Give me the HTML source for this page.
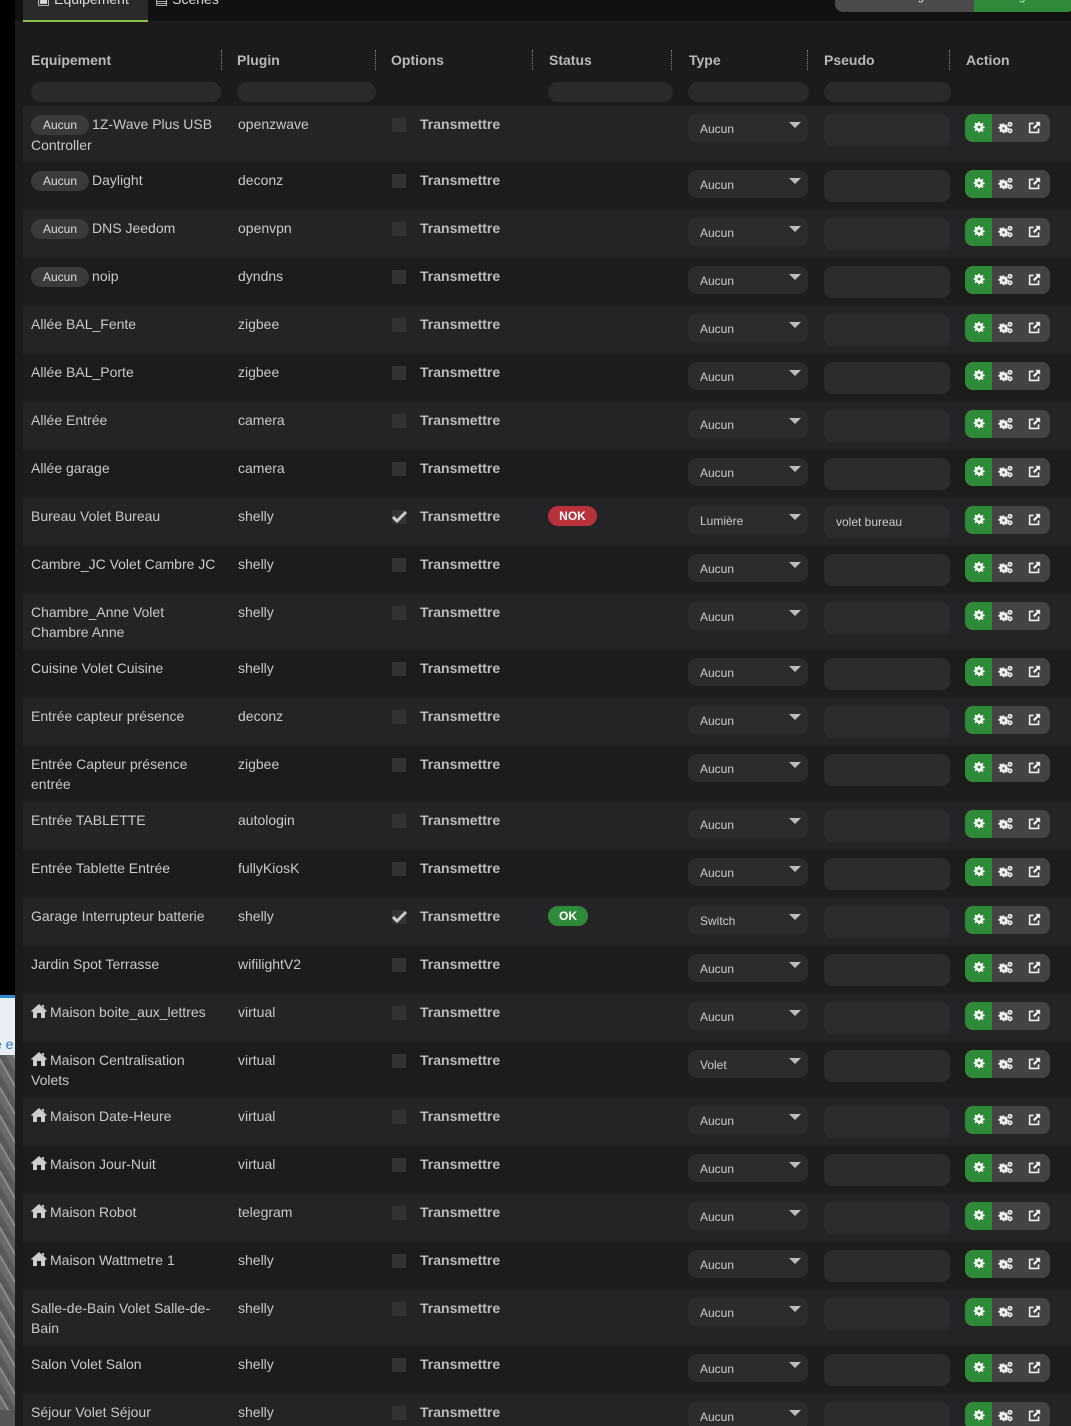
<!DOCTYPE html>
<html style="width:1071px;height:1426px;overflow:hidden"><head><meta charset="utf-8">
<style>
*{box-sizing:border-box;margin:0;padding:0}
html{overflow:hidden}
body{width:1071px;height:1426px;overflow:hidden;background:#1b1b1b;font-family:"Liberation Sans",sans-serif;font-size:14px;color:#c9c9c9;position:relative}
#strip{position:absolute;left:0;top:0;width:15px;height:1426px;background:#000}
#strip .w{position:absolute;left:0;top:995px;width:15px;height:60px;background:#e8eef3;border-top:3px solid #2a8ad8}
#strip .w span{position:absolute;left:-6px;top:38px;color:#2a7ac8;font-size:14px}
#strip .p{position:absolute;left:0;top:1055px;width:15px;height:355px;background:repeating-linear-gradient(60deg,#6b6969 0 6px,#8c8a8a 6px 8px,#5a5858 8px 14px)}
#strip .b{position:absolute;left:0;top:1410px;width:15px;height:16px;background:#555}
#main{position:absolute;left:15px;top:0;width:1056px;height:1426px;background:#1b1b1b;overflow:hidden}
#top{position:absolute;left:0;top:0;width:1056px;height:21px;background:#111}
.tab1{position:absolute;left:8px;top:-8px;width:125px;height:30px;background:#2a2a2a;border-bottom:2px solid #8bc34a;color:#ddd;padding:0 14px;line-height:14px;font-size:14px}
.tab2{position:absolute;left:140px;top:-8px;color:#ddd;line-height:14px;font-size:14px}
.btns{position:absolute;left:820px;top:-10px;height:22px;width:240px;border-radius:0 0 8px 8px;overflow:hidden;display:flex}
.btns .g1{background:#4a4a4a;width:139px;color:#eee;font-size:11px;padding-left:26px;line-height:14px}
.btns .g2{background:#2f8a3a;flex:1;color:#eee;font-size:11px;padding-left:14px;line-height:14px}
.hdr{position:absolute;top:52px;font-weight:bold;color:#b8b8b8;font-size:14px}
.sep{position:absolute;top:50px;height:20px;border-left:1px dotted #888}
.flt{position:absolute;top:82px;height:20px;border-radius:10px;background:#2a2a2a}
.r{position:absolute;left:8px;width:1048px}
.r.o{background:#242426}
.r.e{background:#1c1c1c}
.c{position:absolute;top:8px;line-height:20px}
.eq{left:8px;width:190px}
.pl{left:215px}
.cb{position:absolute;left:369px;top:12px;width:14px;height:14px;background:#333}
.cb svg{position:absolute;left:0;top:0}
.tr{left:397px;font-weight:bold;color:#bcbcbc}
.badge{display:inline-block;background:#3a3a3a;border-radius:10px;padding:0 12px;font-size:12px;line-height:20px;color:#ddd;margin-right:3px}
.st{position:absolute;top:8px;left:525px;height:20px;border-radius:10px;font-size:12px;line-height:20px;color:#fff;text-align:center;font-weight:bold}
.nok{background:#b8323a;width:49px}
.ok{background:#2e8b3a;width:40px}
.sel{position:absolute;left:665px;top:8px;width:120px;height:28px;border-radius:8px;background:#2c2c2c;font-size:12px;color:#ccc;padding:8px 0 0 12px}
.sel:after{content:"";position:absolute;right:7px;top:8px;border-left:6px solid transparent;border-right:6px solid transparent;border-top:6px solid #bbb}
.ps{position:absolute;left:801px;top:8px;width:126px;height:32px;border-radius:8px;background:#2c2c2c;font-size:12px;color:#ccc;padding:9px 0 0 12px}
.act{position:absolute;left:942px;top:8px;width:85px;height:28px;border-radius:8px;background:#434343;overflow:hidden}
.act .gr{position:absolute;left:0;top:0;width:27px;height:28px;background:#2e8b3a}
.act svg{position:absolute;top:7px}
</style></head><body>
<div id="strip"><div class="w"><span>e e</span></div><div class="p"></div><div class="b"></div></div>
<div id="main">
<div id="top"><div class="tab1">▣ Equipement</div><div class="tab2">▤ Scènes</div>
<div class="btns"><div class="g1">Voir la configuration</div><div class="g2">Sauvegarder</div></div></div>
<div class="hdr" style="left:16px">Equipement</div>
<div class="hdr" style="left:222px">Plugin</div>
<div class="hdr" style="left:376px">Options</div>
<div class="hdr" style="left:534px">Status</div>
<div class="hdr" style="left:674px">Type</div>
<div class="hdr" style="left:809px">Pseudo</div>
<div class="hdr" style="left:951px">Action</div>
<div class="sep" style="left:206px"></div><div class="sep" style="left:360px"></div><div class="sep" style="left:517px"></div><div class="sep" style="left:656px"></div><div class="sep" style="left:792px"></div><div class="sep" style="left:934px"></div>
<div class="flt" style="left:16px;width:190px"></div>
<div class="flt" style="left:222px;width:139px"></div>
<div class="flt" style="left:533px;width:125px"></div>
<div class="flt" style="left:673px;width:121px"></div>
<div class="flt" style="left:809px;width:127px"></div>

<svg width="0" height="0" style="position:absolute"><defs>
<symbol id="gear" viewBox="0 0 16 16"><path fill="#fff" d="M7 1h2l.4 2 1.5.7 1.7-1.2 1.4 1.4-1.2 1.7.7 1.5 2 .4v2l-2 .4-.7 1.5 1.2 1.7-1.4 1.4-1.7-1.2-1.5.7L9 15H7l-.4-2-1.5-.7-1.7 1.2-1.4-1.4 1.2-1.7L2.5 9 1 9V7l1.5-.4.7-1.5L2 3.4 3.4 2l1.7 1.2L6.6 2.5zM8 6a2 2 0 100 4 2 2 0 000-4z"/></symbol>
<symbol id="cogs" viewBox="0 0 18 16"><path fill="#eee" d="M5 3h2l.3 1.5 1.2.5 1.3-.9 1.4 1.4-.9 1.3.5 1.2 1.5.3v2l-1.5.3-.5 1.2.9 1.3-1.4 1.4-1.3-.9-1.2.5L7 15H5l-.3-1.5-1.2-.5-1.3.9-1.4-1.4.9-1.3L1 9.5-.5 9.2v-2L1 7l.5-1.2-.9-1.3L2 3.1l1.3.9L4.7 3.5zM6 7.5a1.5 1.5 0 100 3 1.5 1.5 0 000-3z"/><circle cx="14" cy="4" r="3" fill="#eee"/><circle cx="14" cy="4" r="1" fill="#434343"/><circle cx="14" cy="12" r="3" fill="#eee"/><circle cx="14" cy="12" r="1" fill="#434343"/></symbol>
<symbol id="ext" viewBox="0 0 16 16"><path fill="none" stroke="#eee" stroke-width="2" d="M7 3H2v11h11V9"/><path fill="#eee" d="M9 1h6v6l-2-2-5 5-2-2 5-5z"/></symbol>
<symbol id="home" viewBox="0 0 16 14"><path fill="#ccc" d="M8 0l8 7-1 1-1-.8V14h-4V9H6v5H2V7.2L1 8 0 7zM11 1h2v3l-2-1.7z"/></symbol>
</defs></svg>

<div id="rows"></div>
</div>
<script>
var R=[
["<span class=badge>Aucun</span>1Z-Wave Plus USB Controller","openzwave",56],
["<span class=badge>Aucun</span>Daylight","deconz"],
["<span class=badge>Aucun</span>DNS Jeedom","openvpn"],
["<span class=badge>Aucun</span>noip","dyndns"],
["Allée BAL_Fente","zigbee"],["Allée BAL_Porte","zigbee"],["Allée Entrée","camera"],["Allée garage","camera"],
["Bureau Volet Bureau","shelly",48,1,"nok","Lumière","volet bureau"],
["Cambre_JC Volet Cambre JC","shelly"],
["Chambre_Anne Volet Chambre Anne","shelly",56],
["Cuisine Volet Cuisine","shelly"],["Entrée capteur présence","deconz"],
["Entrée Capteur présence entrée","zigbee",56],
["Entrée TABLETTE","autologin"],["Entrée Tablette Entrée","fullyKiosK"],
["Garage Interrupteur batterie","shelly",48,1,"ok","Switch"],
["Jardin Spot Terrasse","wifilightV2"],
["H Maison boite_aux_lettres","virtual"],
["H Maison Centralisation Volets","virtual",56,0,0,"Volet"],
["H Maison Date-Heure","virtual"],["H Maison Jour-Nuit","virtual"],["H Maison Robot","telegram"],["H Maison Wattmetre 1","shelly"],
["Salle-de-Bain Volet Salle-de-Bain","shelly",56],
["Salon Volet Salon","shelly"],["Séjour Volet Séjour","shelly"]];
var y=106,h="";
R.forEach(function(r,i){var ht=r[2]||48;var n=r[0].replace(/^H /,'<svg width="16" height="14" style="vertical-align:-1px;margin-right:3px"><use href="#home"/></svg>');
h+='<div class="r '+(i%2?'e':'o')+'" style="top:'+y+'px;height:'+ht+'px">'+
'<div class="c eq">'+n+'</div><div class="c pl">'+r[1]+'</div>'+
'<div class="cb">'+(r[3]?'<svg width="16" height="14" viewBox="0 0 16 14"><path d="M1 7l4 4 9-9" stroke="#ccc" stroke-width="3" fill="none"/></svg>':'')+'</div>'+
'<div class="c tr">Transmettre</div>'+
(r[4]?'<div class="st '+r[4]+'">'+r[4].toUpperCase()+'</div>':'')+
'<div class="sel">'+(r[5]||'Aucun')+'</div><div class="ps">'+(r[6]||'')+'</div>'+
'<div class="act"><div class="gr"></div><svg style="left:8px" width="12" height="12"><use href="#gear"/></svg><svg style="left:33px" width="16" height="13"><use href="#cogs"/></svg><svg style="left:63px" width="13" height="13"><use href="#ext"/></svg></div></div>';
y+=ht;});
document.getElementById('rows').innerHTML=h;
</script>
</body></html>
